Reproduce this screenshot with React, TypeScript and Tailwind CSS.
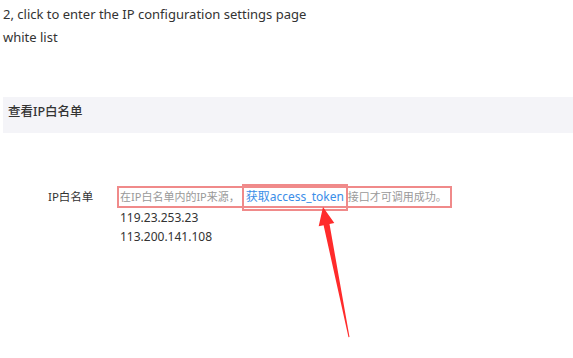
import React from "react";

const font = { fontFamily: '"Noto Sans", "Noto Sans CJK SC", sans-serif' };

export default function App() {
  return (
    <div
      className="relative h-[358px] w-[573px] overflow-hidden bg-white text-[#333]"
      style={font}
    >
      {/* --- INTRO TEXT --- */}
      <div className="pl-[3px] pt-[3px] text-[13px] leading-[23px]">
        <p>2, click to enter the IP configuration settings page</p>
        <p>white list</p>
      </div>

      {/* --- SECTION HEADER --- */}
      <div className="ml-[3px] mt-[48px] flex h-[36px] items-center bg-[#f4f4f8] pb-[5px] pl-[5px]">
        <h2 className="text-[12.5px] font-medium text-[#333]">查看IP白名单</h2>
      </div>

      {/* --- WHITELIST ROW --- */}
      <div className="mt-[53px] flex">
        <div className="w-[117px] shrink-0 pl-[48px] pt-[2px] text-[11.5px] leading-[18px]">
          IP白名单
        </div>
        <div className="flex flex-col items-start">
          <div className="flex h-[22px] items-center whitespace-nowrap border-2 border-[#f08a8a] pl-[1px] pr-[3px] text-[11px] text-[#999]">
            <span className="pr-[2px]">在IP白名单内的IP来源，</span>
            <span className="flex h-[27px] items-center border-2 border-[#f08a8a] px-[2px] text-[12px] text-[#3b8ee8]">
              获取access_token
            </span>
            <span>接口才可调用成功。</span>
          </div>
          <div className="pl-[3px] text-[12px] leading-[19px]">
            <p>119.23.253.23</p>
            <p>113.200.141.108</p>
          </div>
        </div>
      </div>

      {/* --- ANNOTATION ARROW --- */}
      <svg
        className="absolute left-0 top-0"
        width="573"
        height="358"
        viewBox="0 0 573 358"
      >
        <polygon
          points="323,207 334.3,223 329.5,224 349.5,337 348.5,337.2 323.6,225.2 318.7,226.2"
          fill="#ff2b2b"
        />
      </svg>
    </div>
  );
}
